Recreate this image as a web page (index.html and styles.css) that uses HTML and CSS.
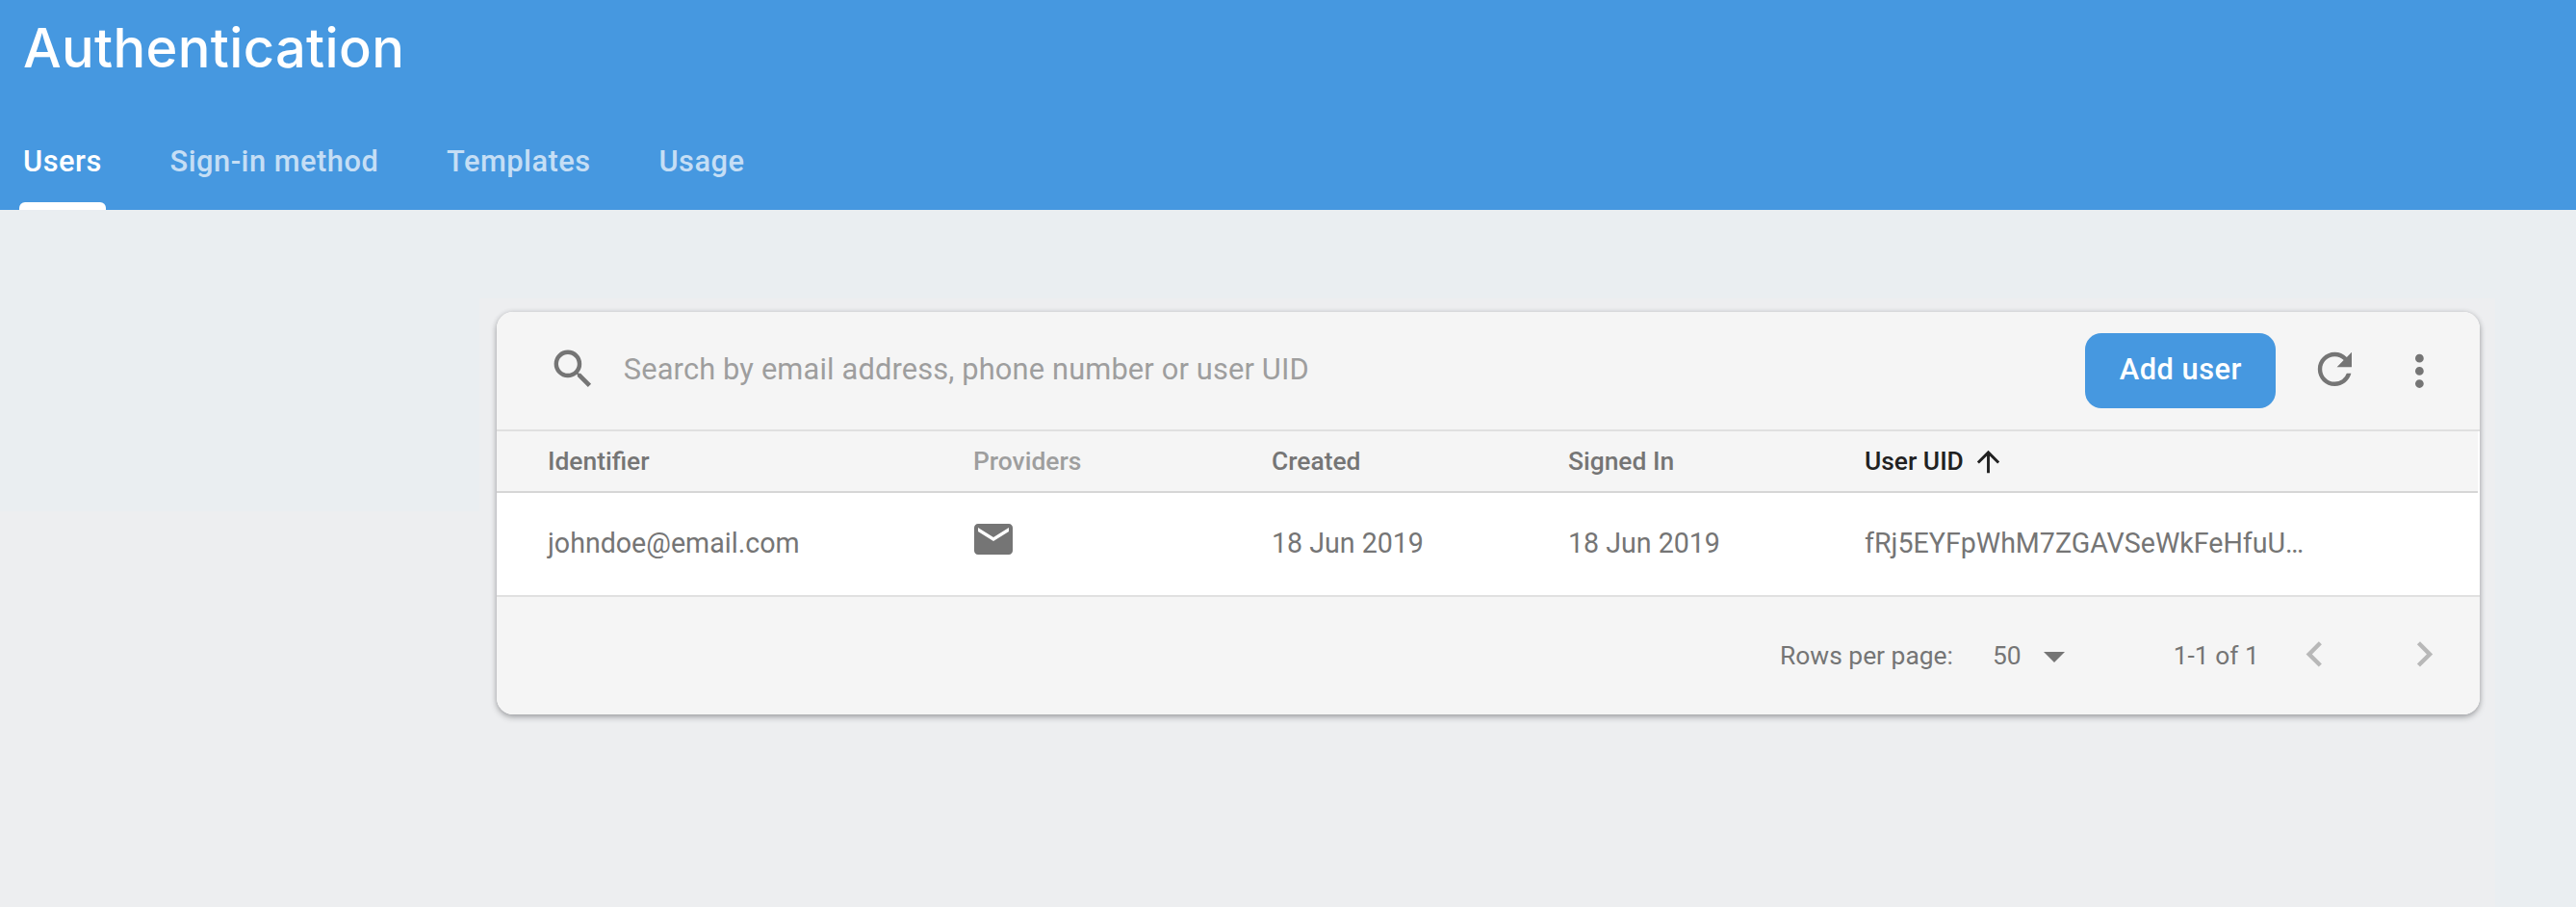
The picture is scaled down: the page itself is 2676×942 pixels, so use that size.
FILE: index.html
```html
<!DOCTYPE html>
<html lang="en">
<head>
<meta charset="utf-8">
<title>Authentication</title>
<link rel="stylesheet" href="styles.css">
</head>
<body>
<header class="header">
  <h1 class="title">Authentication</h1>
  <nav class="tabs">
    <a class="tab tab-active">Users</a>
    <a class="tab">Sign-in method</a>
    <a class="tab">Templates</a>
    <a class="tab">Usage</a>
  </nav>
</header>
<main class="content">
  <section class="card">
    <div class="toolbar">
      <svg class="icon search-icon" viewBox="0 0 24 24"><path d="M15.5 14h-.79l-.28-.27A6.471 6.471 0 0 0 16 9.5 6.5 6.5 0 1 0 9.5 16c1.61 0 3.09-.59 4.23-1.57l.27.28v.79l5 4.99L20.49 19l-4.99-5zm-6 0C7.01 14 5 11.99 5 9.5S7.01 5 9.5 5 14 7.01 14 9.5 11.99 14 9.5 14z"/></svg>
      <span class="search">Search by email address, phone number or user UID</span>
      <button class="add">Add user</button>
      <svg class="icon refresh" viewBox="0 0 24 24"><path d="M17.65 6.35A7.958 7.958 0 0 0 12 4c-4.42 0-7.99 3.58-7.99 8s3.57 8 7.99 8c3.73 0 6.84-2.55 7.73-6h-2.08A5.99 5.99 0 0 1 12 18c-3.31 0-6-2.69-6-6s2.69-6 6-6c1.66 0 3.14.69 4.22 1.78L13 11h7V4l-2.35 2.35z"/></svg>
      <svg class="icon more" viewBox="0 0 24 24"><path d="M12 8c1.1 0 2-.9 2-2s-.9-2-2-2-2 .9-2 2 .9 2 2 2zm0 2c-1.1 0-2 .9-2 2s.9 2 2 2 2-.9 2-2-.9-2-2-2zm0 6c-1.1 0-2 .9-2 2s.9 2 2 2 2-.9 2-2-.9-2-2-2z"/></svg>
    </div>
    <div class="row thead">
      <span>Identifier</span>
      <span class="muted">Providers</span>
      <span>Created</span>
      <span>Signed In</span>
      <span class="sorted">User UID<svg class="arrow" viewBox="0 0 24 24"><path d="M4 12l1.41 1.41L11 7.83V20h2V7.83l5.58 5.59L20 12l-8-8-8 8z"/></svg></span>
    </div>
    <div class="row tbody">
      <span>johndoe@email.com</span>
      <svg class="mail" viewBox="0 0 24 24"><path d="M20 4H4c-1.1 0-1.99.9-1.99 2L2 18c0 1.1.9 2 2 2h16c1.1 0 2-.9 2-2V6c0-1.1-.9-2-2-2zm0 4l-8 5-8-5V6l8 5 8-5v2z"/></svg>
      <span>18 Jun 2019</span>
      <span>18 Jun 2019</span>
      <span>fRj5EYFpWhM7ZGAVSeWkFeHfuU…</span>
    </div>
    <footer class="footer">
      <span>Rows per page:</span>
      <span class="rows-value">50</span>
      <svg class="caret" viewBox="0 0 22 11"><path d="M0 0h22L11 11z"/></svg>
      <span class="range">1-1 of 1</span>
      <svg class="icon prev" viewBox="0 0 24 24"><path d="M15.41 7.41L14 6l-6 6 6 6 1.41-1.41L10.83 12z"/></svg>
      <svg class="icon next" viewBox="0 0 24 24"><path d="M10 6L8.59 7.41 13.17 12l-4.58 4.59L10 18l6-6z"/></svg>
    </footer>
  </section>
</main>
</body>
</html>
```
FILE: styles.css
```css
* { box-sizing: border-box; }
body {
  margin: 0;
  height: 942px;
  font-family: Roboto, "Liberation Sans", sans-serif;
  color: #757575;
}
svg { display: block; fill: currentColor; flex: none; }
.header {
  height: 218px;
  background: #4698e0;
  color: #fff;
  display: flex;
  flex-direction: column;
  justify-content: space-between;
}
.title {
  margin: 0;
  padding: 15px 0 0 24px;
  font: 500 56px/70px Inter, sans-serif;
  letter-spacing: .35px;
}
.tabs { display: flex; padding-left: 20px; gap: 62.8px; height: 102px; }
.tab {
  position: relative;
  padding: 2px 4px 0;
  font-weight: 500;
  font-size: 30.8px;
  line-height: 100px;
  letter-spacing: .5px;
  color: rgba(255,255,255,.7);
}
.tab-active { color: #fff; }
.tab-active::after {
  content: "";
  position: absolute;
  left: 0;
  right: 0;
  bottom: 0;
  height: 8px;
  border-radius: 6px 6px 0 0;
  background: #fff;
}
.content {
  height: 724px;
  padding: 106px 100px 0 516px;
  background:
    linear-gradient(#eaeef1, #eaeef1) 0 0 / 100% 92px no-repeat,
    linear-gradient(#eaeef1, #eaeef1) 0 0 / 498px 313px no-repeat,
    linear-gradient(#eaeef1, #eaeef1) 100% 0 / 84px 100% no-repeat,
    #edeef0;
}
.card {
  height: 418px;
  border-radius: 17px;
  overflow: hidden;
  background: #fff;
  box-shadow: 0 3px 6px rgba(60,64,67,.38), 0 0 5px rgba(60,64,67,.16);
}
.toolbar {
  height: 124px;
  display: flex;
  align-items: center;
  padding: 0 36px 0 52.5px;
  border-bottom: 2px solid #e0e0e0;
  background: #f5f5f5;
}
.icon { width: 52.8px; height: 52.8px; }
.search-icon, .refresh { margin-bottom: 3px; }
.search {
  flex: 1;
  padding: 0 0 3px 26.5px;
  font-size: 30.8px;
  letter-spacing: .15px;
  color: #9e9e9e;
}
.add {
  width: 198px;
  height: 78px;
  border: 0;
  padding: 0 0 3px;
  border-radius: 17px;
  background: #4698e0;
  color: #fff;
  font: 500 30.8px Roboto, sans-serif;
  letter-spacing: .5px;
}
.refresh { margin-left: 35px; }
.more { margin-left: 35px; }
.row {
  display: grid;
  grid-template-columns: 442px 310px 308px 308px 1fr;
  align-items: center;
  padding-left: 53px;
}
.thead {
  height: 64px;
  margin-right: 2px;
  border-bottom: 2px solid #d6d6d6;
  background: #f5f5f5;
  font-size: 26.4px;
  font-weight: 500;
}
.tbody { height: 108px; padding-bottom: 2px; border-bottom: 2px solid #e0e0e0; font-size: 28.6px; }
.muted { color: #9e9e9e; }
.sorted { display: flex; align-items: center; color: #212121; }
.arrow { width: 35px; height: 35px; margin-left: 8px; }
.mail { width: 48px; height: 48px; margin: 0 0 8px -3px; }
.footer {
  height: 122px;
  display: flex;
  align-items: center;
  padding-left: 1333px;
  background: #f5f5f5;
  font-size: 26.4px;
}
.rows-value { margin-left: 41px; }
.caret { width: 22px; height: 11px; margin: 2px 0 0 23px; }
.range { margin-left: 113px; }
.prev, .next { margin-bottom: 4px; color: #b8b8b8; }
.prev { margin-left: 31px; }
.next { margin-left: 61px; }
```
